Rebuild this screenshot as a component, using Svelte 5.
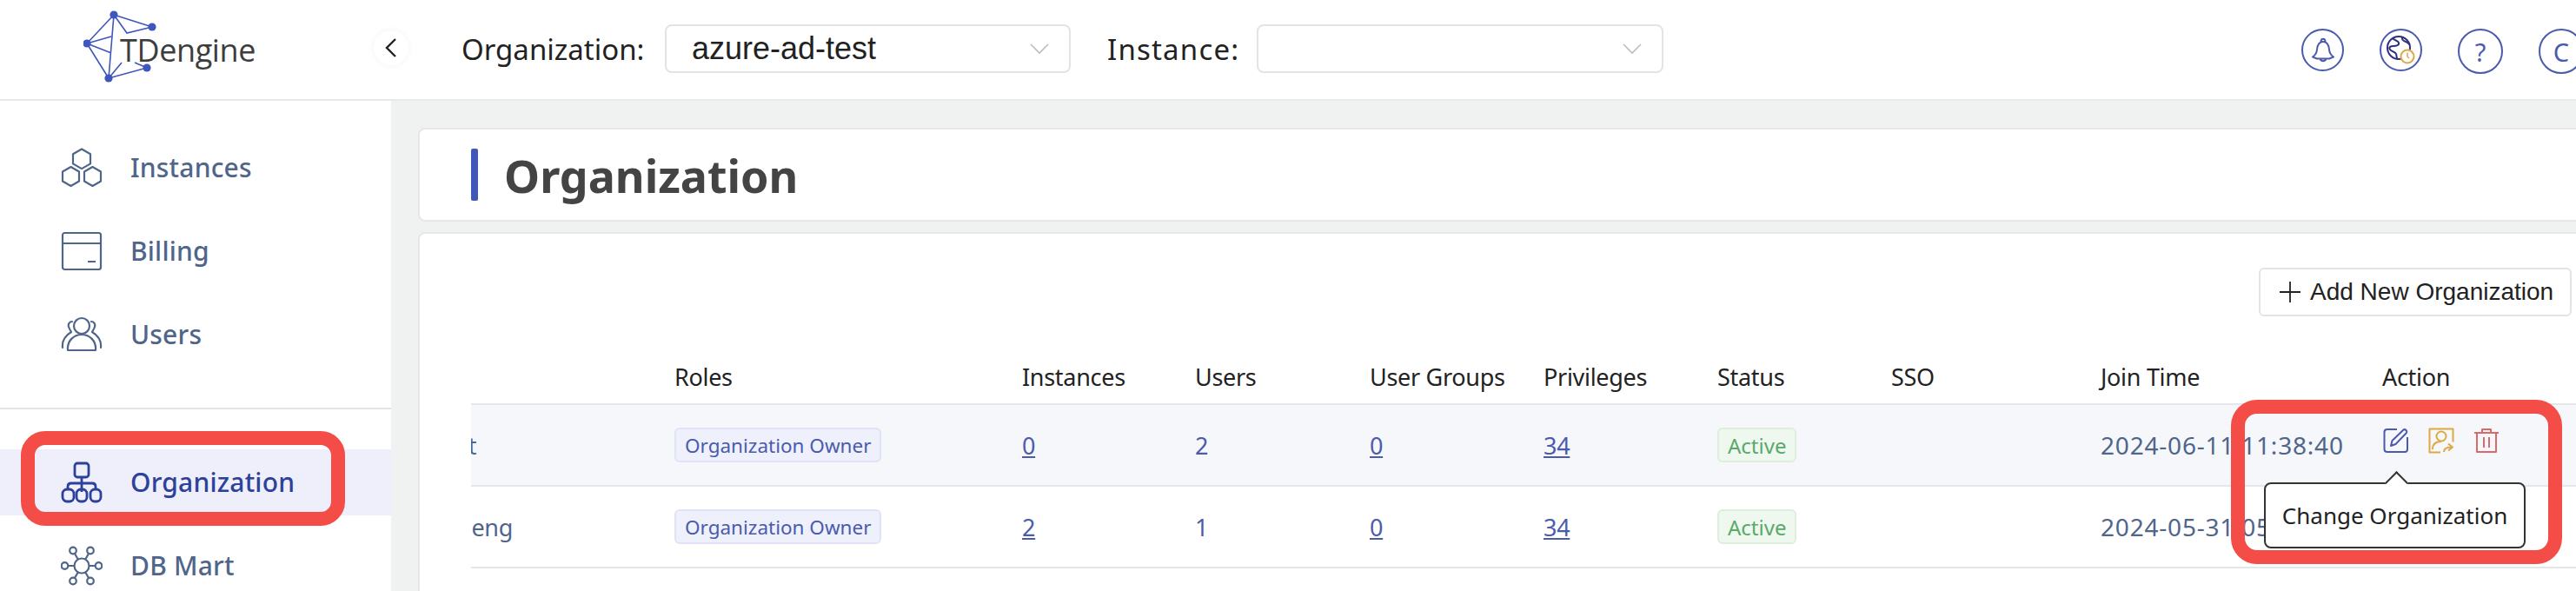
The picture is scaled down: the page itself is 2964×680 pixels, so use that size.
<script>
  const columns = ['Roles', 'Instances', 'Users', 'User Groups', 'Privileges', 'Status', 'SSO', 'Join Time', 'Action'];
  const rows = [
    { name: 'st', instances: '0', users: '2', groups: '0', privileges: '34', joined: '2024-06-11 11:38:40' },
    { name: 'heng', instances: '2', users: '1', groups: '0', privileges: '34', joined: '2024-05-31 05' },
    { name: '', instances: '', users: '', groups: '', privileges: '', joined: '' }
  ];
</script>

<div class="root">
  <header class="header">
    <div class="logo">
      <svg class="logo-mark" viewBox="0 0 84 84" width="84" height="84" aria-hidden="true">
        <g fill="none" stroke="#3f57bd" stroke-width="1.6">
          <path d="M35 6 79 20M35 6 4 39M35 6 29 79M4 39 29 79M29 79 73 67M35 6 50 27 79 20M4 39 32 31M4 39 32 50M29 79 44 61M59 61 73 67" />
        </g>
        <g fill="#3f57bd">
          <circle cx="35" cy="6" r="4.6" /><circle cx="79" cy="20" r="4.6" /><circle cx="4" cy="39" r="4.6" /><circle cx="73" cy="67" r="4.6" /><circle cx="29" cy="79" r="4.6" />
        </g>
      </svg>
      <span class="logo-text">TDengine</span>
    </div>
    <button class="collapse" aria-label="Collapse">
      <svg viewBox="0 0 16 24" width="16" height="24"><path d="M13 2 3 12l10 10" fill="none" stroke="#222" stroke-width="2.4" /></svg>
    </button>
    <span class="label org-label">Organization:</span>
    <div class="select org-select">
      <span>azure-ad-test</span>
      <svg class="chev" viewBox="0 0 22 14" width="22" height="14"><path d="M1 2l10 10L21 2" fill="none" stroke="#bcbcbc" stroke-width="1.6" /></svg>
    </div>
    <span class="label inst-label">Instance:</span>
    <div class="select inst-select">
      <span></span>
      <svg class="chev" viewBox="0 0 22 14" width="22" height="14"><path d="M1 2l10 10L21 2" fill="none" stroke="#bcbcbc" stroke-width="1.6" /></svg>
    </div>
    <div class="tools">
      <span class="circle">
        <svg viewBox="0 0 28 32" width="28" height="32"><path d="M14 6c-5 0-6.500 4-7 9-.3 4-2 6.500-5 8.500l5 2h14l5-2c-3-2-4.700-4.500-5-8.500-.5-5-2-9-7-9ZM11.500 6c0-4.500 5-4.500 5 0M10.500 25.500c1 3.500 6 3.500 7 0" fill="none" stroke="#4a5bae" stroke-width="2" stroke-linejoin="round" /></svg>
      </span>
      <span class="circle">
        <svg viewBox="0 0 36 36" width="36" height="36">
          <circle cx="15" cy="15" r="13" fill="none" stroke="#2f2f80" stroke-width="2" />
          <path d="M8 4c2 3 6 2 7 5s-3 4-6 4-6 1-4 4 6 2 7 5 0 5 2 6M19 2c-1 3 1 5 4 6s3 3 5 3" fill="none" stroke="#2f2f80" stroke-width="2" />
          <circle cx="25" cy="25" r="7.500" fill="#fff" stroke="#dfa84a" stroke-width="2" />
          <path d="M25 20.500V25l2 2" fill="none" stroke="#dfa84a" stroke-width="1.500" />
        </svg>
      </span>
      <span class="circle big">?</span>
      <span class="circle big">C</span>
    </div>
  </header>

  <div class="body">
    <aside class="sidebar">
      <nav class="nav">
        <div class="item">
          <svg viewBox="0 0 48 48" width="48" height="48"><g fill="none" stroke="currentColor" stroke-width="2.200" stroke-linejoin="round"><path d="M24 2.500l10 5.700v11.200l-10 5.700-10-5.700V8.200ZM11.500 23l9.500 5.500v11L11.500 45 2 39.500v-11ZM36.500 23l9.500 5.500v11L36.500 45 27 39.500v-11Z" /></g></svg>
          <span>Instances</span>
        </div>
        <div class="item">
          <svg viewBox="0 0 48 48" width="48" height="48"><g fill="none" stroke="currentColor" stroke-width="2.200" stroke-linejoin="round"><rect x="2" y="3" width="44" height="42" rx="2.500" /><path d="M2 15h44M31 36h9" /></g></svg>
          <span>Billing</span>
        </div>
        <div class="item">
          <svg viewBox="0 0 48 48" width="48" height="48"><g fill="none" stroke="currentColor" stroke-width="2.200" stroke-linecap="round" stroke-linejoin="round"><circle cx="24" cy="14" r="9" /><path d="M8 42c-1-11 7-18 16-18s17 7 16 18ZM13 9c-3 0-5 3-4 6s2 4 3 6c-5 3-11 9-10 18M35 9c3 0 5 3 4 6s-2 4-3 6c5 3 11 9 10 18" /></g></svg>
          <span>Users</span>
        </div>
        <hr class="rule" />
        <div class="item active">
          <svg viewBox="0 0 48 48" width="48" height="48"><g fill="none" stroke="currentColor" stroke-width="2.800" stroke-linejoin="round"><rect x="16" y="2" width="16" height="16" rx="3" /><path d="M24 18v17M8 32v-3c0-3 2-4 4-4h24c2 0 4 1 4 4v3" /><rect x="2" y="32" width="13" height="14" rx="5" /><rect x="18" y="32" width="12" height="14" rx="5" /><rect x="34" y="32" width="12" height="14" rx="5" /></g></svg>
          <span>Organization</span>
        </div>
        <div class="item">
          <svg viewBox="0 0 48 48" width="48" height="48"><g fill="none" stroke="currentColor" stroke-width="2.200"><circle cx="24" cy="24" r="8.500" /><circle cx="14" cy="6.500" r="3.800" /><circle cx="34" cy="6.500" r="3.800" /><circle cx="4.500" cy="24" r="3.800" /><circle cx="43.500" cy="24" r="3.800" /><circle cx="14" cy="41.500" r="3.800" /><circle cx="34" cy="41.500" r="3.800" /><path d="M16 10l4 7M32 10l-4 7M8 24h7M40 24h-7M16 38l4-7M32 38l-4-7" /></g></svg>
          <span>DB Mart</span>
        </div>
      </nav>
    </aside>

    <main class="main">
      <section class="title-card">
        <i class="bar"></i>
        <h1>Organization</h1>
      </section>
      <section class="list-card">
        <div class="toolbar">
          <button class="add">
            <svg class="plus" viewBox="0 0 24 24" width="24" height="24"><path d="M12 0v24M0 12h24" stroke="#222" stroke-width="1.800" /></svg>
            Add New Organization
          </button>
        </div>
        <div class="table">
          <div class="tr head">
            <div></div>
            {#each columns as c}<div>{c}</div>{/each}
          </div>
          {#each rows as r, i}
            <div class="tr row" class:shade={i === 0}>
              <div class="name"><span>{r.name}</span></div>
              <div><span class="tag role">Organization Owner</span></div>
              <div><a href="#i">{r.instances}</a></div>
              <div class="num">{r.users}</div>
              <div><a href="#g">{r.groups}</a></div>
              <div><a href="#p">{r.privileges}</a></div>
              <div><span class="tag ok">Active</span></div>
              <div></div>
              <div class="date">{r.joined}</div>
              <div class="actions">
                <svg viewBox="0 0 30 30" width="30" height="30"><g fill="none" stroke="#4a5bae" stroke-width="2" stroke-linejoin="round"><path d="M16 2H5C3 2 1.500 3 1.500 5v20c0 2 1.500 3 3.500 3h20c2 0 3-1 3-3V11" /><path d="M9 21l1.500-6L23 3c1-1 2.500-1 3.500 0s1 2.500 0 3.500L14.500 19Z" /></g></svg>
                <svg viewBox="0 0 30 30" width="30" height="30"><g fill="none" stroke="#dea943" stroke-width="2" stroke-linejoin="round"><path d="M14 28.500H1.500v-27h27v15" /><circle cx="15" cy="10" r="5.500" /><path d="M5 25c0-6 4-9 10-9M18 28c0-4 3-5.500 8-5.500M23 18.500l5 4-5 4" /></g></svg>
                <svg viewBox="0 0 30 30" width="30" height="30"><g fill="none" stroke="#d96a6a" stroke-width="2" stroke-linejoin="round"><path d="M1 6h28M10 6V2h10v4M4 6v22h22V6M12 11v12M18 11v12" /></g></svg>
              </div>
            </div>
          {/each}
        </div>
      </section>
    </main>
  </div>

  <div class="tooltip"><span>Change Organization</span></div>
  <div class="mark mark-nav"></div>
  <div class="mark mark-action"></div>
</div>

<style>
  :global(body) { margin: 0; background: #fff; }
  * { box-sizing: border-box; }
  .root {
    position: relative; width: 2964px; height: 680px; overflow: hidden;
    font-family: "Noto Sans", "Open Sans", sans-serif; color: #222; background: #fff;
  }
  .header {
    display: flex; align-items: center; height: 116px; border-bottom: 2px solid #e8eaea; padding-bottom: 2px;
    white-space: nowrap;
  }
  .logo { flex: none; width: 430px; height: 114px; display: flex; align-items: flex-start; padding: 12px 0 0 96px; }
  .logo-mark { flex: none; }
  .logo-text { margin: 22px 0 0 -42px; font-family: "Open Sans", sans-serif; font-size: 36px; letter-spacing: -.4px; color: #3d3d3d; line-height: 50px; }
  .collapse {
    flex: none; width: 40px; height: 40px; margin-top: -2px; padding: 0; border: 0; border-radius: 50%; background: #fff;
    box-shadow: 0 0 8px rgba(0,0,0,.05); display: flex; align-items: center; justify-content: center;
  }
  .label { flex: none; font-size: 33px; color: #222; }
  .org-label { margin-left: 61px; width: 234px; }
  .inst-label { margin-left: 42px; width: 172px; letter-spacing: 1.200px; }
  .select {
    flex: none; height: 56px; border: 2px solid #e2e3e3; border-radius: 8px; display: flex; align-items: center;
    justify-content: space-between; padding: 0 23px 0 29px; font-family: "Liberation Sans", sans-serif; font-size: 36px; color: #222;
  }
  .org-select { width: 467px; }
  .inst-select { width: 468px; }
  .tools { flex: none; display: flex; gap: 41px; margin-left: 734px; margin-top: 6px; }
  .circle {
    flex: none; width: 49px; height: 49px; border: 2.500px solid #4a5bae; border-radius: 50%; display: flex; align-items: center; justify-content: center;
    color: #4a5bae; font-size: 29px;
  }
  .big { width: 52px; height: 52px; }

  .body { display: flex; height: 564px; }
  .sidebar { flex: none; width: 450px; background: #fff; padding-top: 39px; }
  .nav { display: flex; flex-direction: column; gap: 20px; }
  .item {
    height: 76px; display: flex; align-items: center; gap: 32px; padding-left: 70px; color: #4f658a; font-size: 30px; font-weight: 500; letter-spacing: .2px;
  }
  .item svg { flex: none; }
  .item span { padding-bottom: 2px; }
  .item.active { background: #eeeffa; color: #2c4199; }
  .rule { height: 2px; margin: 26px 0 26px; border: 0; background: #e4e4e4; }

  .main { flex: none; width: 2551px; background: #f0f2f2; padding: 31px 0 0 31px; }
  .title-card {
    display: flex; align-items: center; height: 108px; background: #fff; border: 2px solid #e6e7e7; border-radius: 8px; padding-left: 59px;
  }
  .bar { width: 8px; height: 60px; background: #4058b8; border-radius: 2px; }
  h1 { margin: 0 0 0 30px; font-size: 52px; font-weight: 700; color: #444; }
  .list-card {
    margin-top: 12px; height: 430px; background: #fff; border: 2px solid #e6e7e7; border-radius: 8px; padding: 39px 0 0 59px;
  }
  .toolbar { display: flex; justify-content: flex-end; padding-right: 40px; }
  .add {
    height: 56px; width: 360px; background: #fff; border: 2px solid #e3e3e3; border-radius: 6px; font-family: "Liberation Sans", sans-serif;
    font-size: 28px; color: #222; display: flex; align-items: center; padding: 0 0 0 22px; white-space: nowrap; gap: 11px;
  }
  .plus { flex: none; }
  .table { margin-top: 42px; }
  .tr {
    display: grid; grid-template-columns: 234px 400px 199px 201px 200px 200px 200px 241px 324px 1fr; align-items: center;
    font-size: 27px; letter-spacing: -.3px; white-space: nowrap;
  }
  .head { height: 58px; color: #222; padding-bottom: 3px; }
  .row { height: 94px; color: #4f658a; border-top: 2px solid #e4e6e8; }
  .row.shade { background: #f5f7fb; }
  .name { overflow: hidden; }
  .name span { display: inline-block; margin-left: -16px; }
  .row a { color: #4a5bae; }
  .num { color: #4a5bae; }
  .date { font-size: 28px; letter-spacing: .8px; }
  .tag {
    display: inline-flex; align-items: center; height: 40px; border-radius: 6px; padding: 0 10px; border: 2px solid; letter-spacing: 0;
  }
  .role { background: #eef0fb; border-color: #e0e3f5; color: #4a5bae; font-size: 22.500px; }
  .ok { background: #eef8ee; border-color: #dcefdd; color: #5aa96b; font-size: 24px; }
  .actions { display: flex; gap: 22px; padding: 0 0 10px 1px; }

  .tooltip {
    position: absolute; left: 2605px; top: 555px; width: 301px; height: 76px; background: #fff; border: 2.500px solid #333; border-radius: 8px;
    display: flex; align-items: center; justify-content: center; font-size: 26px; color: #222; white-space: nowrap;
  }
  .tooltip::before {
    content: ""; position: absolute; left: 141px; top: -11px; width: 17px; height: 17px; background: #fff;
    border-left: 2.500px solid #333; border-top: 2.500px solid #333; transform: rotate(45deg);
  }
  .mark { position: absolute; border: 16px solid #f44c47; }
  .mark-nav { left: 24px; top: 496px; width: 373px; height: 109px; border-radius: 28px; }
  .mark-action { left: 2567px; top: 460px; width: 381px; height: 189px; border-radius: 30px; }
</style>
